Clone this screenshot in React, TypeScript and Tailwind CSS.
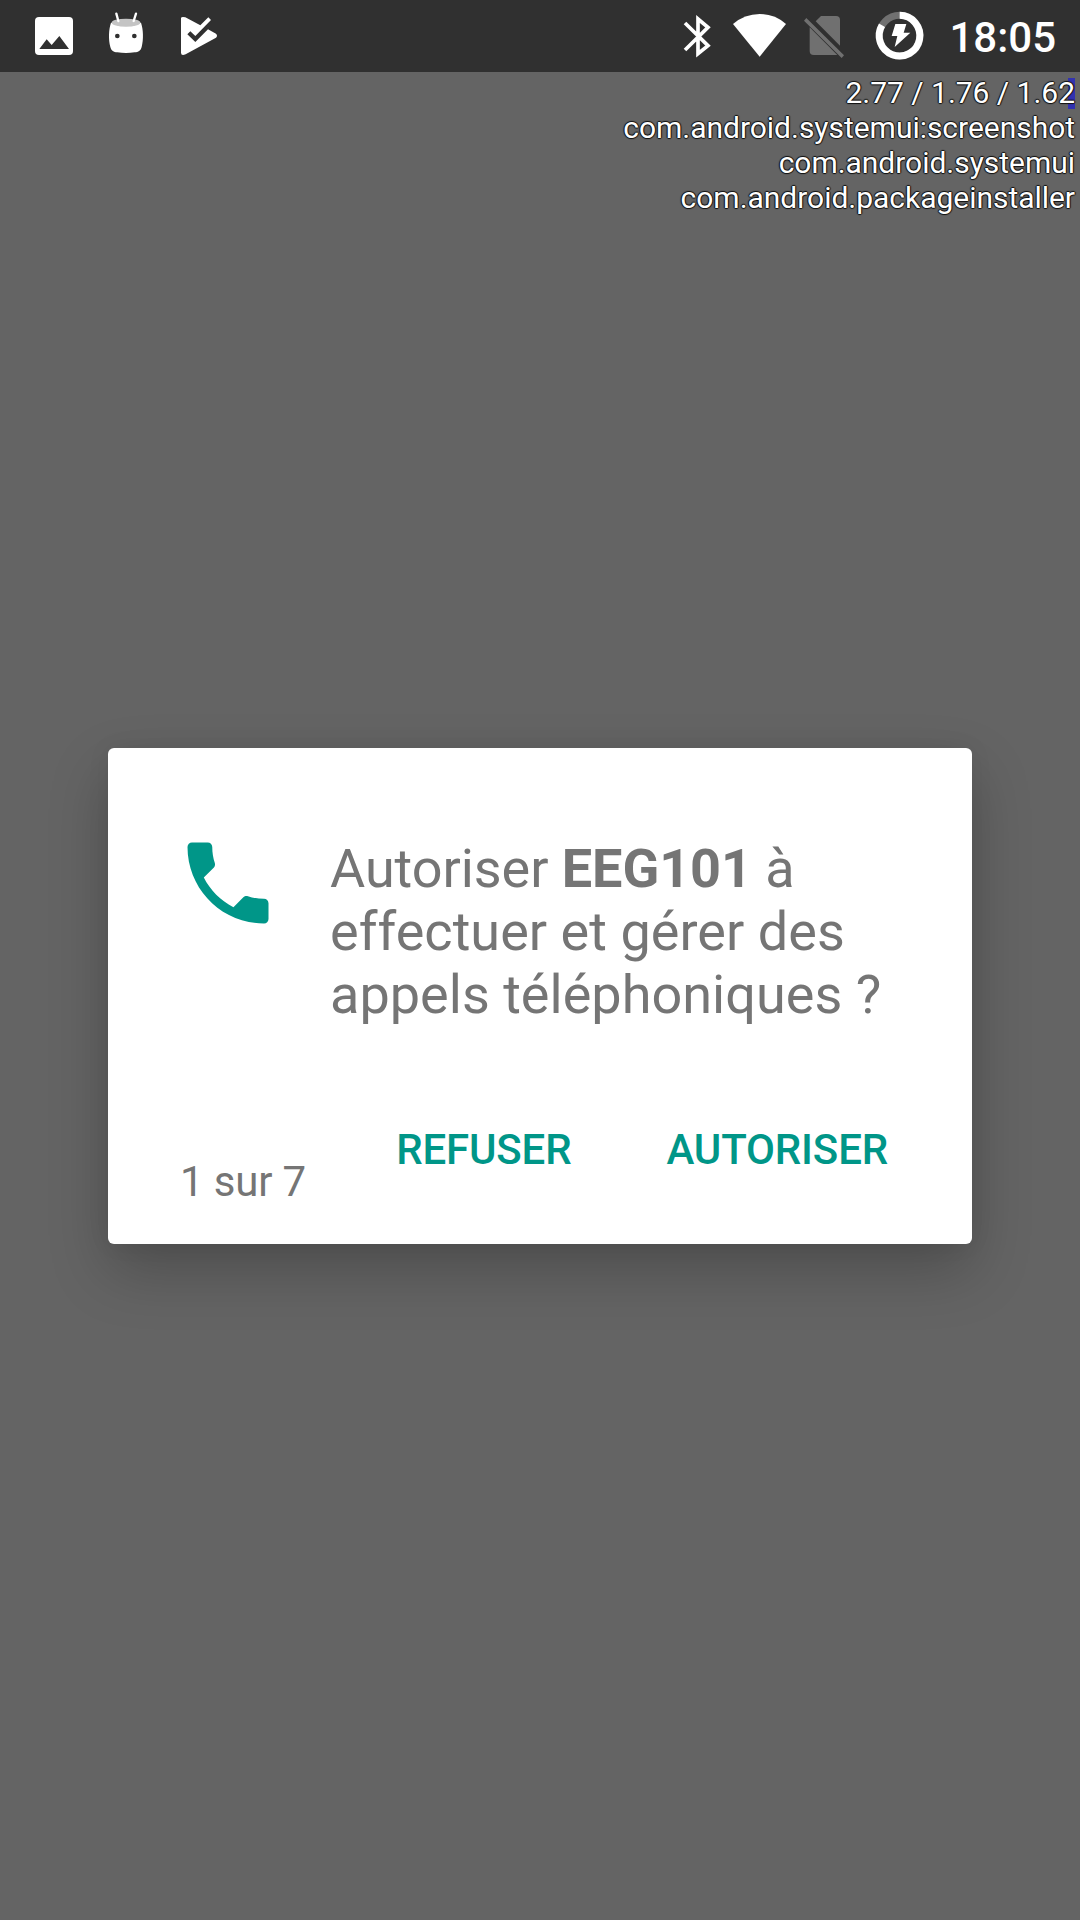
const svgBase = 'block h-[72px] shrink-0'

function ImageIcon() {
  return (
    <svg className={`${svgBase} w-[72px]`} viewBox="54 0 216 216">
      <rect x="105" y="51" width="114" height="114" rx="12" fill="#fff" />
      <path d="M118 147L140 118L155 135L178 108L207 147Z" fill="#303030" />
    </svg>
  )
}

function RobotIcon() {
  return (
    <svg className={`${svgBase} w-[72px]`} viewBox="270 0 216 216">
      <path d="M333 68C326 88 325 118 331 141C334 153 341 156 352 157C369 160 387 160 404 157C415 156 422 153 425 141C431 118 430 88 423 68Z" fill="#fff" />
      <ellipse cx="378" cy="68" rx="43" ry="12" fill="#c4c4c4" />
      <path d="M349 41L355 63M408 41L401 63" stroke="#fff" strokeWidth="7" strokeLinecap="round" />
      <circle cx="352" cy="108" r="7" fill="#303030" />
      <circle cx="403" cy="108" r="7" fill="#303030" />
    </svg>
  )
}

function PlayCheckIcon() {
  return (
    <svg className={`${svgBase} w-[72px]`} viewBox="486 0 216 216">
      <path d="M543 55Q543 51 549 51L556 52L601 76L625 52L633 60L586 108L571 94L562 103L586 126L624 88L648 101Q654 107 648 113L557 163Q552 165 549 165Q543 165 543 158Z" fill="#fff" />
    </svg>
  )
}

function BluetoothIcon() {
  return (
    <svg className={`${svgBase} w-[60px]`} viewBox="2001 0 180 216">
      <path d="M2055 69L2124 137L2094 161V57L2124 82L2055 150" fill="none" stroke="#fff" strokeWidth="11" />
    </svg>
  )
}

function WifiIcon() {
  return (
    <svg className={`${svgBase} w-[60px]`} viewBox="2181 0 180 216">
      <path d="M2279 170L2199 72Q2234 42 2279 42Q2324 42 2358 72Z" fill="#fff" />
    </svg>
  )
}

function NoSimIcon() {
  return (
    <svg className={`${svgBase} w-[70px]`} viewBox="2361 0 210 216">
      <g fill="#707070">
        <path d="M2447 64L2463 48H2508Q2520 48 2520 60V137Z" />
        <path d="M2429 82L2512 165H2441Q2429 165 2429 153Z" />
        <path d="M2412 62L2419 54L2532 166L2525 174Z" />
      </g>
    </svg>
  )
}

function BatteryIcon() {
  return (
    <svg className={`${svgBase} w-[88px]`} viewBox="2571 0 264 216">
      <circle cx="2699" cy="107" r="61" fill="none" stroke="#707070" strokeWidth="21" />
      <path d="M2699 46A61 61 0 1 1 2646 76" fill="none" stroke="#fff" strokeWidth="21" />
      <path d="M2686 72H2719L2711 98H2731L2684 141L2692 108H2675Z" fill="#fff" />
    </svg>
  )
}

function PhoneIcon() {
  return (
    <svg className="size-[108px] shrink-0" viewBox="0 0 24 24" fill="#009688">
      <path d="M6.62 10.79c1.44 2.83 3.76 5.14 6.59 6.59l2.2-2.2c.27-.27.67-.36 1.02-.24 1.12.37 2.33.57 3.57.57.55 0 1 .45 1 1V20c0 .55-.45 1-1 1-9.39 0-17-7.61-17-17 0-.55.45-1 1-1h3.5c.55 0 1 .45 1 1 0 1.25.2 2.45.57 3.57.11.35.03.74-.25 1.02l-2.2 2.2z" />
    </svg>
  )
}

const processes = ['com.android.systemui:screenshot', 'com.android.systemui', 'com.android.packageinstaller']

export default function App() {
  return (
    <div className="relative flex h-[1920px] w-[1080px] flex-col overflow-hidden bg-[#646464] font-['Roboto',sans-serif]">
      <header className="flex h-[72px] shrink-0 items-center justify-between bg-[#303030] pl-[18px] pr-[24px]">
        <div className="flex">
          <ImageIcon />
          <RobotIcon />
          <PlayCheckIcon />
        </div>
        <div className="flex items-center">
          <BluetoothIcon />
          <WifiIcon />
          <NoSimIcon />
          <BatteryIcon />
          <span className="w-[111px] whitespace-nowrap pt-[3px] text-right text-[42px] font-medium leading-[49px] text-white">18:05</span>
        </div>
      </header>

      <div className="absolute right-[5px] top-[75px] text-right text-[30px] leading-[35px] tracking-[-0.03px] text-white">
        <div className="absolute right-0 top-[3px] h-[31px] w-[7px] bg-[#3232b0]" />
        <div className="relative [text-shadow:1px_0_1px_#111,-1px_0_1px_#111,0_1px_1px_#111,0_-1px_1px_#111]">
          <p>2.77 / 1.76 / 1.62</p>
          {processes.map((name) => (
            <p key={name}>{name}</p>
          ))}
        </div>
      </div>

      <main className="flex flex-1 items-center justify-center">
        <section className="flex h-[496px] w-[864px] flex-col rounded-[6px] bg-white shadow-[0_26px_60px_rgba(0,0,0,0.23),0_0_24px_rgba(0,0,0,0.06)]">
          <div className="flex gap-[48px] pl-[66px] pt-[81px]">
            <PhoneIcon />
            <h1 className="whitespace-nowrap pt-[8px] text-[54px] font-normal leading-[63px] text-[#757575]">
              <span className="tracking-[-0.05px]">Autoriser <b className="font-bold">EEG101</b> à</span><br />
              <span className="tracking-[0.04px]">effectuer et gérer des</span><br />
              <span className="tracking-[0.02px]">appels téléphoniques ?</span>
            </h1>
          </div>
          <footer className="flex flex-1 items-start justify-between pl-[72px] pr-[84px] text-[42px] leading-[50px] tracking-[-0.15px]">
            <p className="whitespace-nowrap pt-[131px] text-[#757575]">1 sur 7</p>
            <div className="flex gap-[95px] pt-[99px] font-medium text-[#009688]">
              <button>REFUSER</button>
              <button>AUTORISER</button>
            </div>
          </footer>
        </section>
      </main>
    </div>
  )
}
